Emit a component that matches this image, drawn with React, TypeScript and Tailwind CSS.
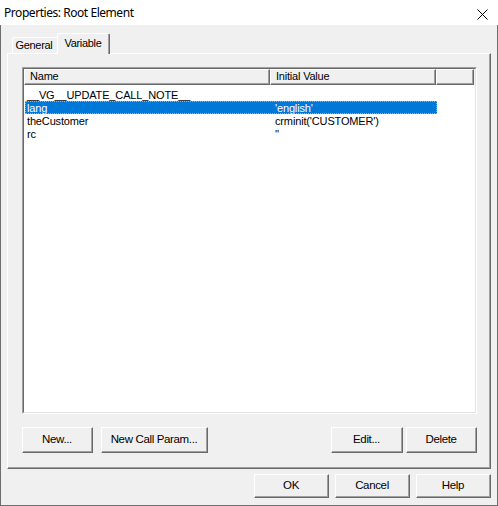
import React from "react";

const rows = [
  { name: "__VG__UPDATE_CALL_NOTE__", value: "" },
  { name: "lang", value: "'english'", selected: true },
  { name: "theCustomer", value: "crminit('CUSTOMER')" },
  { name: "rc", value: "''" },
];

function Btn({ label, w, h }: { label: string; w: string; h: string }) {
  return (
    <div className={`${w} ${h} flex border-t border-l border-white border-r border-b border-r-[#696969] border-b-[#696969]`}>
      <div className="flex-1 flex items-center justify-center border-r border-b border-[#a0a0a0] bg-[#f0f0f0] text-[11.5px] text-black tracking-[-0.35px]">
        {label}
      </div>
    </div>
  );
}

function HeaderCell({ label, w }: { label: string; w: string }) {
  return (
    <div className={`${w} h-full flex border-t border-l border-white border-r border-b border-r-[#696969] border-b-[#696969]`}>
      <div className="flex-1 flex items-center pl-[5px] border-r border-b border-[#a0a0a0] text-[11px] text-black tracking-[-0.2px] whitespace-nowrap overflow-hidden">
        {label}
      </div>
    </div>
  );
}

export default function App() {
  return (
    <div className="w-[498px] h-[506px] flex flex-col bg-[#f0f0f0] font-['Liberation_Sans',Arial,sans-serif] select-none">
      {/* Title bar */}
      <div className="h-[25px] bg-white flex items-center justify-between pl-[4px] pr-[10px]">
        <span className="font-['Noto_Sans',sans-serif] text-[12px] text-black tracking-[-0.45px]">Properties: Root Element</span>
        <svg width="11" height="11" viewBox="0 0 11 11" className="mt-[3px]">
          <path d="M0.5 0.5 L10.5 10.5 M10.5 0.5 L0.5 10.5" stroke="#000" strokeWidth="1" />
        </svg>
      </div>

      {/* Body */}
      <div className="flex-1 flex flex-col border-x border-b border-[#6e6e6e] px-[6px] pt-[8px] pb-[7px]">
        {/* Tabs */}
        <div className="h-[20px] flex items-end relative z-10">
          <div className="ml-[5px] w-[45px] h-[16px] flex border-t border-l border-white rounded-tl-[2px]">
            <div className="flex-1 flex items-center justify-center text-[11px] text-black tracking-[-0.3px] pb-[1px] pr-[2px]">General</div>
          </div>
          <div className="w-[53px] h-[21px] -mb-[1px] flex border-t border-l border-white border-r border-r-[#696969] bg-[#f0f0f0] rounded-t-[2px]">
            <div className="flex-1 flex items-center justify-center border-r border-[#a0a0a0] text-[11px] text-black tracking-[-0.3px] pb-[2px]">Variable</div>
          </div>
        </div>

        {/* Panel */}
        <div className="h-[416px] flex border-t border-l border-white border-r border-b border-r-[#696969] border-b-[#696969]">
          <div className="flex-1 flex flex-col border-r border-b border-[#a0a0a0] pl-[14px] pr-[12px] pt-[13px] pb-[14px]">
            {/* List view */}
            <div className="h-[347px] flex border-t border-l border-[#a0a0a0] border-r border-b border-r-white border-b-white">
              <div className="flex-1 flex flex-col border-t border-l border-[#696969] border-r border-b border-r-[#e3e3e3] border-b-[#e3e3e3] bg-white overflow-hidden">
                <div className="h-[16px] flex bg-[#f0f0f0] shrink-0">
                  <HeaderCell label="Name" w="w-[246px]" />
                  <HeaderCell label="Initial Value" w="w-[166px]" />
                  <HeaderCell label="" w="w-[38px]" />
                </div>
                <div className="flex flex-col pt-[3px] pl-[1px]">
                  {rows.map((r) => (
                    <div
                      key={r.name}
                      className={`h-[13px] w-[412px] flex items-center text-[11px] leading-[13px] tracking-[-0.15px] pt-[1px] ${
                        r.selected
                          ? "bg-[#0078d7] text-white outline-1 outline-dotted outline-[#f0a040] -outline-offset-1"
                          : "text-black"
                      }`}
                    >
                      <div className="w-[245px] pl-[2px] whitespace-nowrap">{r.name}</div>
                      <div className="flex-1 pl-[5px] whitespace-nowrap">{r.value}</div>
                    </div>
                  ))}
                </div>
              </div>
            </div>

            {/* Panel buttons */}
            <div className="mt-[13px] flex">
              <Btn label="New..." w="w-[71px]" h="h-[26px]" />
              <div className="ml-[8px]">
                <Btn label="New Call Param..." w="w-[107px]" h="h-[26px]" />
              </div>
              <div className="ml-auto flex gap-[3px]">
                <Btn label="Edit..." w="w-[72px]" h="h-[26px]" />
                <Btn label="Delete" w="w-[71px]" h="h-[26px]" />
              </div>
            </div>
          </div>
        </div>

        {/* Dialog buttons */}
        <div className="mt-[5px] flex justify-end gap-[6px]">
          <Btn label="OK" w="w-[75px]" h="h-[24px]" />
          <Btn label="Cancel" w="w-[75px]" h="h-[24px]" />
          <Btn label="Help" w="w-[75px]" h="h-[24px]" />
        </div>
      </div>
    </div>
  );
}
